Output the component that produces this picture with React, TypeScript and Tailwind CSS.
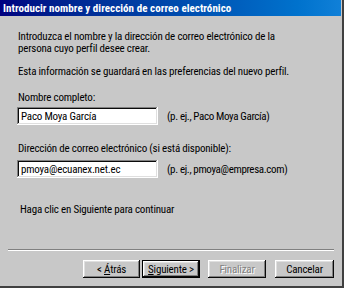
const raised =
  "shadow-[inset_-1px_-1px_#0a0a0a,inset_1px_1px_#ffffff,inset_-2px_-2px_#808080,inset_2px_2px_#dfdfdf]"
const sunken =
  "shadow-[inset_-1px_-1px_#ffffff,inset_1px_1px_#808080,inset_-2px_-2px_#dfdfdf,inset_2px_2px_#0a0a0a]"

function Field({ value, example }: { value: string; example: string }) {
  return (
    <div className="flex items-center">
      <div className={`w-[141px] h-[18px] bg-white pl-[4px] flex items-center ${sunken}`}>{value}</div>
      <span className="ml-[9px] tracking-[-0.35px]">{example}</span>
    </div>
  )
}

export default function App() {
  return (
    <div className="w-[344px] h-[288px] bg-[#c8c8c8] text-black text-[11px] leading-[13px] tracking-[-0.2px] font-['Roboto_Condensed','Liberation_Sans',sans-serif] flex flex-col border-r-2 border-b-2 border-r-[#404040] border-b-[#404040] overflow-hidden">
      <div className="h-[16px] bg-gradient-to-r from-[#000080] to-[#1080d8] mr-[1px] pl-[3px] flex items-center text-white font-bold tracking-[0.05px]">
        Introducir nombre y dirección de correo electrónico
      </div>

      <div className="pl-[18px] flex flex-col">
        <p className="mt-[15px] leading-[12px]">
          Introduzca el nombre y la dirección de correo electrónico de la
          <br />
          persona cuyo perfil desee crear.
        </p>
        <p className="mt-[10px]">Esta información se guardará en las preferencias del nuevo perfil.</p>

        <p className="mt-[13px]">Nombre completo:</p>
        <div className="mt-[3px] -ml-[1px]">
          <Field value="Paco Moya García" example="(p. ej., Paco Moya García)" />
        </div>

        <p className="mt-[17px]">Dirección de correo electrónico (si está disponible):</p>
        <div className="mt-[5px] -ml-[1px]">
          <Field value="pmoya@ecuanex.net.ec" example="(p. ej., pmoya@empresa.com)" />
        </div>

        <p className="mt-[25px] pl-[2px]">Haga clic en Siguiente para continuar</p>
      </div>

      <div className="mt-auto mx-[8px] h-[2px] border-t border-t-[#808080] border-b border-b-white" />

      <div className="flex justify-end pr-[8px] pt-[9px] pb-[8px]">
        <button className={`w-[57px] h-[18px] flex items-center justify-center ${raised}`}>
          &lt;&nbsp;<u>Á</u>trás
        </button>
        <button className="ml-[2px] w-[58px] h-[18px] border border-black flex">
          <span className={`flex-1 flex items-center justify-center ${raised}`}>
            <u>S</u>iguiente&nbsp;&gt;
          </span>
        </button>
        <button
          disabled
          className={`ml-[8px] w-[58px] h-[18px] flex items-center justify-center text-[#808080] [text-shadow:1px_1px_#ffffff] ${raised}`}
        >
          Finalizar
        </button>
        <button className={`ml-[9px] w-[59px] h-[18px] flex items-center justify-center ${raised}`}>
          Cancelar
        </button>
      </div>
    </div>
  )
}
